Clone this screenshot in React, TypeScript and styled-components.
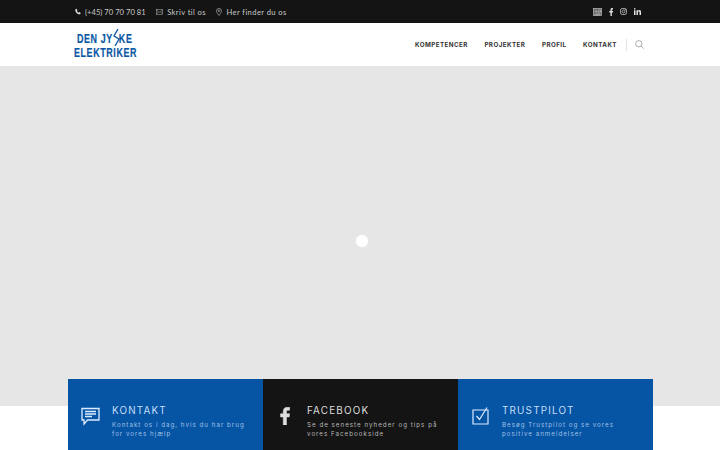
import React from "react";
import styled, { createGlobalStyle } from "styled-components";

const Global = createGlobalStyle`
  html, body { margin: 0; padding: 0; background: #fff; }
  body { font-family: "Inter", "Noto Sans", sans-serif; }
`;
const Page = styled.div`
  width: 720px; height: 450px; overflow: hidden; display: flex; flex-direction: column;
`;
const TopBar = styled.div`
  height: 23px; flex: none; background: #141414; box-sizing: border-box;
  padding: 0 79px 0 75px; display: flex; align-items: center; justify-content: space-between;
`;
const Contacts = styled.div`display: flex; align-items: center; gap: 10.5px;`;
const Contact = styled.span<{ $tight?: boolean }>`
  display: flex; align-items: center; gap: 4px; color: #c8c8c8;
  font: 400 7.6px/12px "Lato", sans-serif; letter-spacing: ${p => (p.$tight ? 0.02 : 0.4)}px;
`;
const Socials = styled.div`display: flex; align-items: center; gap: 7px; color: #dcdcdc;`;
const Nav = styled.div`
  height: 43px; flex: none; background: #fff; box-sizing: border-box;
  padding: 0 76px 0 74px; display: flex; align-items: center; justify-content: space-between;
`;
const Logo = styled.div`position: relative; width: 64px; height: 28px; margin-top: 2px; color: #0b57a4;`;
const LogoLine = styled.div<{ $indent?: boolean }>`
  font: 700 12px/14px "Liberation Sans", sans-serif; -webkit-text-stroke: 0.2px #0b57a4;
  letter-spacing: 0.8px; white-space: pre; transform-origin: left center;
  transform: ${p => (p.$indent ? "translateX(3px) scaleX(.745)" : "scaleX(.745)")};
`;
const Bolt = styled.svg`position: absolute; left: 38px; top: -3px;`;
const Menu = styled.nav`display: flex; align-items: center;`;
const MenuItem = styled.span`
  font: 700 6.25px/10px "Inter", sans-serif; letter-spacing: 0.45px; color: #333;
  & + & { margin-left: 16.5px; }
`;
const Divider = styled.span`width: 1px; height: 12px; background: #e2e2e2; margin: 0 8px 0 9px;`;
const Hero = styled.div`
  height: 340px; flex: none; background: #e6e6e6; display: flex; align-items: center; justify-content: center;
`;
const Dot = styled.div`
  width: 12px; height: 12px; border-radius: 50%; background: #fff; margin: 9px 0 0 3px;
  box-shadow: 0 0 2px rgba(255,255,255,.8);
`;
const Cards = styled.div`
  margin: -27px 0 0 68px; width: 585px; height: 71px; flex: none;
  display: grid; grid-template-columns: repeat(3, 195px); position: relative;
`;
const Card = styled.div<{ $dark?: boolean }>`
  background: ${p => (p.$dark ? "#141414" : "#0654a4")};
  color: ${p => (p.$dark ? "#dedede" : "#c4def8")};
  display: grid; grid-template-columns: 32px 1fr; padding: 25px 0 0 12px;
  box-sizing: border-box; height: 71px;
`;
const IconWrap = styled.div<{ $inset?: number }>`
  padding: 3px 0 0 ${p => p.$inset ?? 0}px; height: 24px;
`;
const CardTitle = styled.div`
  font: 400 9.9px/13px "Inter", sans-serif; letter-spacing: 1.18px; margin-bottom: 3px;
`;
const CardText = styled.div`
  font: 400 6.2px/9px "Inter", sans-serif; letter-spacing: 1.02px; opacity: .8; white-space: pre-line;
`;

const Phone = () => (
  <svg width="6" height="7" viewBox="0 0 24 24" fill="#ddd"><path d="M6 1l4 6-2.500 3c1 3 3.500 5.500 6.500 6.500L17 14l6 4c-.5 3-3 5-5 5C9.500 23 1 14.500 1 6c0-2 2-4.500 5-5z"/></svg>
);
const Mail = () => (
  <svg width="7" height="6" viewBox="0 0 16 13" fill="none" stroke="#bbb" strokeWidth="1.100"><rect x=".6" y=".6" width="14.800" height="11.800"/><path d="M.6 1.500 8 7.500l7.400-6M.6 12l5-6M15.400 12l-5-6"/></svg>
);
const Pin = () => (
  <svg width="6" height="8" viewBox="0 0 12 16" fill="none" stroke="#bbb" strokeWidth="1.200"><path d="M6 15C3 10.500 1 8.500 1 5.800a5 5 0 0 1 10 0C11 8.500 9 10.500 6 15z"/><circle cx="6" cy="5.500" r="1.800"/></svg>
);
const Fb = ({ size, stroke = 0 }: { size: number; stroke?: number }) => (
  <svg width={size * 0.55} height={size} viewBox="0 0 11 20" fill="currentColor" stroke="currentColor" strokeWidth={stroke}><path d="M7.200 20v-9h3l.5-3.500H7.200V5.300c0-1 .3-1.700 1.800-1.700h1.800V.4C10.500.3 9.400.2 8.200.2 5.500.2 3.600 1.900 3.600 4.900v2.600H.6V11h3v9z"/></svg>
);

export default function App() {
  return (
    <Page>
      <Global />
      <TopBar>
        <Contacts>
          <Contact $tight><Phone />(+45) 70 70 70 81</Contact>
          <Contact><Mail />Skriv til os</Contact>
          <Contact><Pin />Her finder du os</Contact>
        </Contacts>
        <Socials>
          <svg width="9" height="8" viewBox="0 0 18 16" fill="none" stroke="#ccc" strokeWidth="1.300">
            <rect x="1" y="1" width="16" height="14" fill="#555" />
            <path d="M3 4h5M3 7h5M3 10h12M3 13h12M10 4h5v4h-5z" />
          </svg>
          <Fb size={8} />
          <svg width="7" height="7" viewBox="0 0 14 14" fill="none" stroke="#ddd" strokeWidth="1.400">
            <rect x="1" y="1" width="12" height="12" rx="3.500" /><circle cx="7" cy="7" r="2.800" /><circle cx="10.500" cy="3.500" r=".5" />
          </svg>
          <svg width="7" height="7" viewBox="0 0 14 14" fill="#e6e6e6">
            <rect x="0" y="4.500" width="3" height="9.500" /><circle cx="1.500" cy="1.600" r="1.600" />
            <path d="M5 4.500h2.800v1.300C8.300 5 9.400 4.200 10.800 4.200c2.500 0 3.200 1.600 3.200 4V14h-3V8.800c0-1.200-.3-2-1.400-2-1.200 0-1.700.9-1.700 2V14H5z" />
          </svg>
        </Socials>
      </TopBar>
      <Nav>
        <Logo>
          <LogoLine $indent>{"DEN JY  KE"}</LogoLine>
          <LogoLine>ELEKTRIKER</LogoLine>
          <Bolt width="9" height="17" viewBox="0 0 9 17" fill="none" stroke="#0b57a4" strokeWidth="1.300">
            <path d="M6 0 2 7l5 3-4 7" />
          </Bolt>
        </Logo>
        <Menu>
          <MenuItem>KOMPETENCER</MenuItem>
          <MenuItem>PROJEKTER</MenuItem>
          <MenuItem>PROFIL</MenuItem>
          <MenuItem>KONTAKT</MenuItem>
          <Divider />
          <svg width="9" height="9" viewBox="0 0 18 18" fill="none" stroke="#777" strokeWidth="1.200">
            <circle cx="7.500" cy="7.500" r="6.300" /><path d="m12 12 5.400 5.400" />
          </svg>
        </Menu>
      </Nav>
      <Hero><Dot /></Hero>
      <Cards>
        <Card>
          <IconWrap $inset={1}>
            <svg width="19" height="19" viewBox="0 0 19 19" fill="none" stroke="#dcecff" strokeWidth="1.300">
              <path d="M1 1.500h17v11.500H6.500L3 17v-4H1z" />
              <path d="M4 4.500h11M4 7h11M4 9.500h7" />
            </svg>
          </IconWrap>
          <div>
            <CardTitle>KONTAKT</CardTitle>
            <CardText>{"Kontakt os i dag, hvis du har brug\nfor vores hjælp"}</CardText>
          </div>
        </Card>
        <Card $dark>
          <IconWrap $inset={5}><Fb size={18} stroke={0.6} /></IconWrap>
          <div>
            <CardTitle>FACEBOOK</CardTitle>
            <CardText>{"Se de seneste nyheder og tips på\nvores Facebookside"}</CardText>
          </div>
        </Card>
        <Card>
          <IconWrap $inset={1}>
            <svg width="19" height="18" viewBox="0 0 19 18" fill="none" stroke="#dcecff" strokeWidth="1.200">
              <path d="M2 3h15v14H2z" />
              <path d="m5.500 9 3 3.500L16 .5" />
            </svg>
          </IconWrap>
          <div>
            <CardTitle>TRUSTPILOT</CardTitle>
            <CardText>{"Besøg Trustpilot og se vores\npositive anmeldelser"}</CardText>
          </div>
        </Card>
      </Cards>
    </Page>
  );
}
